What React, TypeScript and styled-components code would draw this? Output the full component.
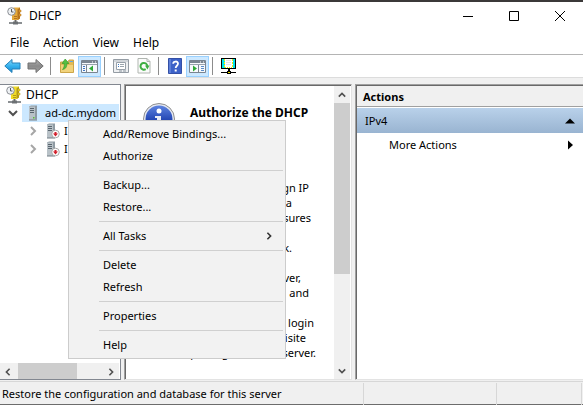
import React from "react";
import styled, { createGlobalStyle, css } from "styled-components";

const Global = createGlobalStyle`
  * { box-sizing: border-box; }
  html, body { margin: 0; height: 100%; }
  body { overflow: hidden; }
  body, button { font: 11px/16px "Noto Sans", "Open Sans", sans-serif; color: #000; }
  button { border: 0; padding: 0; background: none; text-align: left; }
  svg { display: block; flex: none; }
  ul, p, h1, h2 { margin: 0; padding: 0; list-style: none; }
`;

const Window = styled.div`
  height: 100vh;
  display: flex;
  flex-direction: column;
  background: #f0f0f0;
  border-top: 2px solid #3b3939;
  border-bottom: 1px solid #6c6c6c;
`;

const TitleBar = styled.header`
  display: flex;
  align-items: center;
  height: 28px;
  padding-left: 7px;
  gap: 6px;
  background: #fff;
`;
const Title = styled.h1`
  flex: 1;
  font-size: 12px;
  font-weight: 400;
`;
const CaptionButtons = styled.div`
  display: flex;
`;
const CaptionButton = styled.button`
  width: 46px;
  height: 28px;
  display: grid;
  place-items: center;
`;

const MenuBar = styled.nav`
  display: flex;
  height: 24px;
  padding: 2px 0 0 3px;
  background: #fff;
`;
const MenuBarItem = styled.button`
  padding: 0 7px;
  font-size: 12px;
  line-height: 22px;
`;

const Toolbar = styled.div`
  display: flex;
  align-items: center;
  height: 24px;
  padding-left: 1px;
  background: #fff;
  border-top: 1px solid #b4b4b4;
  border-bottom: 1px solid #dcdcdc;
`;
const ToolButton = styled.button<{ $on?: boolean }>`
  width: 23px;
  height: 21px;
  display: grid;
  place-items: center;
  ${(p) => p.$on && css`background: #cce8ff; border: 1px solid #99d1ff;`}
`;
const ToolSeparator = styled.span`
  width: 8px;
  height: 18px;
  padding-left: 3px;
  &::before {
    content: "";
    display: block;
    width: 1px;
    height: 100%;
    background: #8c8c8c;
  }
`;

const Panes = styled.main`
  flex: 1;
  min-height: 0;
  display: grid;
  grid-template-columns: 121px minmax(0, 1fr) minmax(0, 1fr);
  gap: 3px;
  padding-top: 6px;
`;

const TreePane = styled.section`
  display: flex;
  flex-direction: column;
  min-height: 0;
  background: #fff;
  border: solid #828790;
  border-width: 1px 1px 1px 0;
  padding: 1px 1px 0 0;
`;
const Tree = styled.ul`
  flex: 1;
  overflow: hidden;
`;
const TreeRow = styled.li<{ $indent: number; $root?: boolean }>`
  display: flex;
  align-items: center;
  height: 18px;
  padding-left: ${(p) => p.$indent}px;
  font-size: ${(p) => (p.$root ? 12 : 11)}px;
`;
const TreeLabel = styled.span<{ $selected?: boolean }>`
  display: flex;
  align-items: center;
  gap: 4px;
  flex: 1;
  height: 18px;
  padding-left: 4px;
  white-space: nowrap;
  background: ${(p) => (p.$selected ? "#cce8ff" : "transparent")};
`;
const Expander = styled.button`
  flex: none;
  width: 18px;
  height: 18px;
  display: grid;
  place-items: center;
`;
const ScrollBar = styled.div<{ $vertical?: boolean }>`
  display: flex;
  flex-direction: ${(p) => (p.$vertical ? "column" : "row")};
  background: #f0f0f0;
  ${(p) => (p.$vertical ? css`width: 16px;` : css`height: 16px;`)}
`;
const ScrollButton = styled.button`
  min-width: 16px;
  min-height: 17px;
  display: grid;
  place-items: center;
`;
const Track = styled.div<{ $vertical?: boolean }>`
  flex: 1;
  display: flex;
  padding: ${(p) => (p.$vertical ? 0 : "0 0 0 2px")};
`;
const Thumb = styled.div<{ $vertical?: boolean }>`
  background: #cdcdcd;
  width: ${(p) => (p.$vertical ? "100%" : "69%")};
  height: ${(p) => (p.$vertical ? "66%" : "100%")};
`;

const sunken = css`
  border: 1px solid;
  border-color: #a0a0a0 #e3e3e3 #e3e3e3 #a0a0a0;
  box-shadow: inset 1px 1px 0 #696969;
`;
const ContentPane = styled.section`
  ${sunken}
  display: flex;
  min-height: 0;
  background: #fff;
  padding: 1px 1px 0 1px;
`;
const Article = styled.article`
  flex: 1;
  min-width: 0;
  overflow: hidden;
  padding: 16px 0 0 16px;
`;
const ArticleHead = styled.div`
  display: grid;
  grid-template-columns: 34px 1fr;
  gap: 14px;
  height: 78px;
`;
const Heading = styled.h2`
  font-size: 12px;
  line-height: 22px;
  white-space: nowrap;
`;
const Line = styled.p<{ $width: number }>`
  display: flex;
  justify-content: flex-end;
  width: ${(p) => p.$width}px;
  height: 15px;
  line-height: 15px;
  white-space: nowrap;
`;

const ActionsPane = styled.aside`
  ${sunken}
  background: #fff;
  border-right: 0;
  padding: 1px 0 0 1px;
`;
const ActionsTitle = styled.h2`
  height: 21px;
  margin-bottom: 1px;
  padding: 3px 6px 1px;
  font-size: 11px;
  background: #f0f0f0;
  border-bottom: 1px solid #a0a0a0;
`;
const ActionsGroup = styled.button`
  display: flex;
  align-items: center;
  justify-content: space-between;
  width: 100%;
  height: 25px;
  padding: 0 8px;
  background: linear-gradient(#b9d1ea, #99b4d1);
`;
const ActionsItem = styled(ActionsGroup)`
  height: 24px;
  padding-left: 32px;
  background: none;
`;

const StatusBar = styled.footer`
  display: grid;
  grid-template-columns: 364fr 133fr 85fr;
  height: 23px;
  margin-top: 1px;
  padding: 1px 1px 1px 0;
  border-top: 1px solid #d7d7d7;
`;
const StatusCell = styled.div`
  min-width: 0;
  padding: 3px 2px;
  border-right: 1px solid #d7d7d7;
  white-space: nowrap;
`;

const ContextMenu = styled.ul`
  position: absolute;
  left: 68px;
  top: 120px;
  width: 218px;
  padding: 2px;
  background: #f2f2f2;
  border: 1px solid #ccc;
`;
const ContextItem = styled.button`
  display: flex;
  align-items: center;
  justify-content: space-between;
  width: 100%;
  height: 22px;
  padding: 0 10px 0 32px;
`;
const ContextSeparator = styled.li`
  height: 7px;
  padding: 3px 0 3px 28px;
  &::before {
    content: "";
    display: block;
    height: 1px;
    background: #d0d0d0;
  }
`;

const DhcpIcon = ({ body, shade }: { body: string; shade: string }) => (
  <svg width="16" height="18" viewBox="0 0 16 18">
    <path d="M5 1.500 7 .5h6v11l-2 1.500H5z" fill={body} />
    <path d="M10.500 2.500 13 .5v11L10.500 13z" fill={shade} />
    <path d="M12 3h2v2h-2zM12 7h2v2h-2z" fill={body} stroke={shade} strokeWidth=".5" />
    <path d="M7 9.500h3M7 11.500h3" stroke={shade} />
    <circle cx="4.500" cy="4.500" r="3.800" fill="#eef1f4" stroke="#8b8f94" />
    <path d="M4.500 2v3h2" fill="none" stroke="#55585c" />
    <path d="M8.500 13v2" stroke="#666" strokeWidth="2" />
    <path d="M2 16h13" stroke="#8b8f92" strokeWidth="2" />
    <path d="M6 14.500h5v3H6z" fill="#6c7073" />
  </svg>
);

type ChevronProps = { dir: "up" | "down" | "left" | "right"; color?: string; size?: number; weight?: number };
const chevronPaths = { up: "M1 7 5 3l4 4", down: "M1 3l4 4 4-4", left: "M7 1 3 5l4 4", right: "M3 1l4 4-4 4" };
const Chevron = ({ dir, color = "#505050", size = 8, weight = 2 }: ChevronProps) => (
  <svg width={size} height={size} viewBox="0 0 10 10">
    <path d={chevronPaths[dir]} fill="none" stroke={color} strokeWidth={weight} />
  </svg>
);

const ArrowIcon = ({ left }: { left?: boolean }) => (
  <svg width="17" height="16" viewBox="0 0 17 16">
    <defs>
      <linearGradient id={left ? "ab" : "ag"} x1="0" y1="0" x2="0" y2="1">
        <stop offset="0" stopColor={left ? "#8ad8fa" : "#b4b4b4"} />
        <stop offset=".5" stopColor={left ? "#35b2ee" : "#8a8a8a"} />
        <stop offset="1" stopColor={left ? "#1b86cc" : "#a0a0a0"} />
      </linearGradient>
    </defs>
    <path
      d={left ? "M.8 8 8 1.500v3.500h8v6H8v3.500z" : "M16.200 8 9 1.500v3.500H1v6h8v3.500z"}
      fill={`url(#${left ? "ab" : "ag"})`}
      stroke={left ? "#2580b8" : "#707070"}
      strokeLinejoin="round"
    />
  </svg>
);

const FolderIcon = () => (
  <svg width="16" height="16" viewBox="0 0 16 16">
    <path d="M1.500 4H9l1-2h4.500v12.500h-13z" fill="#e3bb55" stroke="#cda648" />
    <path d="M2 7h12v7H2z" fill="#f1d37c" />
    <path d="M10.500 3.500H14" stroke="#63a8e0" />
    <path d="M3.500 11.500C7 11 8 8.500 7.800 5.500H10L6.200 1 3 5.500h2.200C5.400 8 5 10 3.500 11.500z" fill="#55c043" stroke="#2f9427" strokeWidth=".6" />
  </svg>
);

const PaneIcon = ({ right }: { right?: boolean }) => (
  <svg width="17" height="13" viewBox="0 0 17 13">
    <path d="M.5.500h16v12H.5z" fill="#f8fafc" stroke="#7a8590" />
    <path d="M1 1h15v2H1z" fill="#7b8691" />
    <path d="M11 2h1M14 2h1" stroke="#fff" />
    <path d="M1 4.500h15" stroke="#98a2ac" />
    {right ? (
      <>
        <path d="M9.500 5v7" stroke="#7a8590" />
        <path d="M4 5.500v6l4-3z" fill="#2faa36" />
        <path d="M12 6.500h3M12 8.500h3M12 10.500h3" stroke="#5a8cc8" />
      </>
    ) : (
      <>
        <path d="M5.500 5v7" stroke="#7a8590" />
        <path d="M12 5.500v6l-4-3z" fill="#2faa36" />
        <path d="M2 6.500h2M2 8.500h2M2 10.500h2" stroke="#3f76c4" />
      </>
    )}
  </svg>
);

const PropertiesIcon = () => (
  <svg width="16" height="16" viewBox="0 0 16 16">
    <path d="M.5 1.500h15v13H.5z" fill="#eef0f2" stroke="#949ca4" />
    <path d="M1 3h14" stroke="#b3bac1" />
    <path d="M3.500 4.500h9v7h-9z" fill="#fff" stroke="#98a1aa" />
    <path d="M5 6.500h1M5 8.500h1" stroke="#3d78bd" />
    <path d="M7 6.500h4M7 8.500h4" stroke="#9ba5ae" />
    <path d="M6 13h3M10 13h3" stroke="#8b959f" />
  </svg>
);

const RefreshIcon = () => (
  <svg width="14" height="16" viewBox="0 0 14 16">
    <path d="M1 .5h9l3 3V15H1z" fill="#fbfcfb" stroke="#b0b5b0" />
    <path d="M10 .5v3h3" fill="none" stroke="#b0b5b0" />
    <path d="M10.300 8A3.400 3.400 0 1 0 8.700 11.200" fill="none" stroke="#3fae43" strokeWidth="2" />
    <path d="M12.500 7.500H8l2.400 4z" fill="#3fae43" />
  </svg>
);

const HelpIcon = () => (
  <svg width="14" height="16" viewBox="0 0 14 16">
    <path d="M.5.500h13v15H.5z" fill="#3c61c8" stroke="#3450a6" />
    <path d="M1 1h2v14H1z" fill="#5c7ed8" />
    <path d="M5.200 5.800C5.200 2.800 10 2.800 10 5.600 10 7.800 7.700 7.700 7.700 10" fill="none" stroke="#fff" strokeWidth="1.800" />
    <path d="M6.700 11.500h2v2h-2z" fill="#fff" />
  </svg>
);

const MonitorIcon = () => (
  <svg width="17" height="16" viewBox="0 0 17 16" shapeRendering="crispEdges">
    <path d="M1 0h15v11H1z" fill="#000" />
    <path d="M2 1h3v9H2zM13 1h2v9h-2z" fill="#00e5ee" />
    <path d="M5 1h8v9H5z" fill="#fff" />
    <path d="M4.500 1v9M12.500 1v9" stroke="#f2e900" strokeDasharray="2 1" />
    <path d="M6 2.500h5M6 4.500h5M6 6.500h5" stroke="#e4e4e4" />
    <path d="M5 9.500h8" stroke="#f2e900" strokeDasharray="1 1" />
    <path d="M8 11h2v2H8zM1 14h6v1H1zM11 14h5v1h-5zM7 13h4v3H7z" fill="#000" />
    <path d="M8 14h2v1H8z" fill="#f2e900" />
  </svg>
);

const ServerIcon = ({ alert }: { alert?: boolean }) => (
  <svg width={alert ? 14 : 15} height="16" viewBox={alert ? "0 0 14 16" : "-2 0 15 16"}>
    <path d="M1 1.500 3 .5h6v14H1z" fill="#8f9ba3" />
    <path d="M1 1.500h6v13.500H1z" fill="#b9c2c8" />
    <path d="M2 3.500h4M2 5.500h4M2 7.500h4" stroke="#59656e" />
    <path d="M1 15h8" stroke="#727e86" />
    {alert ? (
      <>
        <circle cx="9.500" cy="11" r="3.800" fill="#fff" stroke="#a8a8a8" />
        <path d="M8.500 9h2v1.500H12L9.500 13.500 7 10.500h1.500z" fill="#d21f2b" />
      </>
    ) : (
      <path d="M5 12h1.500v1.500H5z" fill="#55bf35" />
    )}
  </svg>
);

const InfoIcon = () => (
  <svg width="34" height="34" viewBox="0 0 34 34">
    <defs>
      <linearGradient id="info" x1="0" y1="0" x2="0" y2="1">
        <stop offset="0" stopColor="#5d83e0" />
        <stop offset=".6" stopColor="#1d3fae" />
      </linearGradient>
    </defs>
    <circle cx="17" cy="17" r="15.500" fill="#e4e8f2" stroke="#8f8f8f" />
    <circle cx="17" cy="17" r="13.500" fill="url(#info)" />
    <circle cx="17" cy="9" r="2.500" fill="#fff" />
    <path d="M13 14h6v11h2v2h-8v-2h2v-9h-2z" fill="#e9ecf5" />
  </svg>
);

const Triangle = ({ up }: { up?: boolean }) => (
  <svg width="10" height="10" viewBox="0 0 10 10">
    <path d={up ? "M0 7.500 5 2.500l5 5z" : "M3 .5 8 5 3 9.500z"} />
  </svg>
);

const contextGroups = [
  ["Add/Remove Bindings...", "Authorize"],
  ["Backup...", "Restore..."],
  ["All Tasks"],
  ["Delete", "Refresh"],
  ["Properties"],
  ["Help"],
];

const lines: [string, number][] = [
  ["Before it can assign IP", 167],
  ["addresses, a", 150],
  ["server ensures", 169],
  ["", 0],
  ["on your network.", 150],
  ["", 0],
  ["authorize a server,", 159],
  ["and", 167],
  ["", 0],
  ["login", 172],
  ["requisite", 164],
  ["privileges for this server.", 174],
  ["", 0],
  ["To authorize the interface for", 147],
];

export default function App() {
  return (
    <>
      <Global />
      <Window>
        <TitleBar>
          <DhcpIcon body="#e5a93a" shade="#b5731f" />
          <Title>DHCP</Title>
          <CaptionButtons>
            <CaptionButton aria-label="Minimize">
              <svg width="10" height="10" viewBox="0 0 10 10"><path d="M0 5.500h10" stroke="#000" /></svg>
            </CaptionButton>
            <CaptionButton aria-label="Maximize">
              <svg width="10" height="10" viewBox="0 0 10 10"><path d="M.5.500h9v9h-9z" fill="none" stroke="#000" /></svg>
            </CaptionButton>
            <CaptionButton aria-label="Close">
              <svg width="10" height="10" viewBox="0 0 10 10"><path d="m0 0 10 10M10 0 0 10" stroke="#000" /></svg>
            </CaptionButton>
          </CaptionButtons>
        </TitleBar>
        <MenuBar>
          {["File", "Action", "View", "Help"].map((m) => <MenuBarItem key={m}>{m}</MenuBarItem>)}
        </MenuBar>
        <Toolbar role="toolbar">
          <ToolButton aria-label="Back"><ArrowIcon left /></ToolButton>
          <ToolButton aria-label="Forward"><ArrowIcon /></ToolButton>
          <ToolSeparator />
          <ToolButton aria-label="Up one level"><FolderIcon /></ToolButton>
          <ToolButton $on aria-label="Console tree"><PaneIcon /></ToolButton>
          <ToolSeparator />
          <ToolButton aria-label="Properties"><PropertiesIcon /></ToolButton>
          <ToolButton aria-label="Refresh"><RefreshIcon /></ToolButton>
          <ToolSeparator />
          <ToolButton aria-label="Help"><HelpIcon /></ToolButton>
          <ToolButton $on aria-label="Action pane"><PaneIcon right /></ToolButton>
          <ToolSeparator />
          <ToolButton aria-label="Server"><MonitorIcon /></ToolButton>
        </Toolbar>
        <Panes>
          <TreePane>
            <Tree>
              <TreeRow $indent={2} $root>
                <TreeLabel><DhcpIcon body="#f0dc28" shade="#b49a18" />DHCP</TreeLabel>
              </TreeRow>
              <TreeRow $indent={4}>
                <Expander aria-label="Collapse"><Chevron dir="down" size={10} /></Expander>
                <TreeLabel $selected><ServerIcon />ad-dc.mydom</TreeLabel>
              </TreeRow>
              {["IPv4", "IPv6"].map((n) => (
                <TreeRow key={n} $indent={24}>
                  <Expander aria-label="Expand"><Chevron dir="right" size={10} color="#a6a6a6" /></Expander>
                  <TreeLabel><ServerIcon alert />{n}</TreeLabel>
                </TreeRow>
              ))}
            </Tree>
            <ScrollBar>
              <ScrollButton aria-label="Scroll left"><Chevron dir="left" /></ScrollButton>
              <Track><Thumb /></Track>
              <ScrollButton aria-label="Scroll right"><Chevron dir="right" /></ScrollButton>
            </ScrollBar>
          </TreePane>
          <ContentPane>
            <Article>
              <ArticleHead>
                <InfoIcon />
                <Heading>Authorize the DHCP</Heading>
              </ArticleHead>
              {lines.map(([text, width], i) => <Line key={i} $width={width}>{text}</Line>)}
            </Article>
            <ScrollBar $vertical>
              <ScrollButton aria-label="Scroll up"><Chevron dir="up" /></ScrollButton>
              <Track $vertical><Thumb $vertical /></Track>
              <ScrollButton aria-label="Scroll down"><Chevron dir="down" /></ScrollButton>
            </ScrollBar>
          </ContentPane>
          <ActionsPane>
            <ActionsTitle>Actions</ActionsTitle>
            <ActionsGroup>IPv4<Triangle up /></ActionsGroup>
            <ActionsItem>More Actions<Triangle /></ActionsItem>
          </ActionsPane>
        </Panes>
        <StatusBar>
          <StatusCell>Restore the configuration and database for this server</StatusCell>
          <StatusCell />
          <StatusCell />
        </StatusBar>
      </Window>
      <ContextMenu>
        {contextGroups.map((group, i) => (
          <React.Fragment key={i}>
            {i > 0 && <ContextSeparator />}
            {group.map((label) => (
              <li key={label}>
                <ContextItem>
                  {label}
                  {label === "All Tasks" && <Chevron dir="right" color="#333" />}
                </ContextItem>
              </li>
            ))}
          </React.Fragment>
        ))}
      </ContextMenu>
    </>
  );
}
